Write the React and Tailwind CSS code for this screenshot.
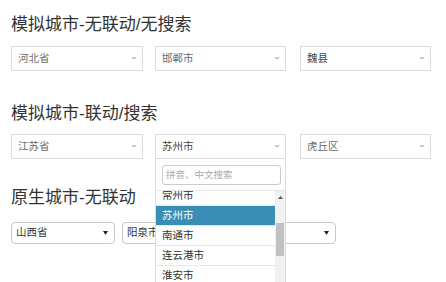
import React from 'react';

const font = { fontFamily: '"Liberation Sans", "Noto Sans CJK SC", sans-serif' };

function Arrow() {
  return (
    <svg width="6" height="3" viewBox="0 0 6 3" className="shrink-0">
      <path d="M0 0 L6 0 L3 3 Z" fill="#c8c8c8" />
    </svg>
  );
}

function Select2Box({ value, dark, className = '', children }) {
  return (
    <div className={`relative h-[25px] ${className}`}>
      <div className="flex h-full items-center justify-between border border-[#dcdcdc] bg-white pl-[6px] pr-[5px]">
        <span className={`text-[10.5px] ${dark ? 'text-[#444]' : 'text-[#6a6a6a]'}`}>{value}</span>
        <Arrow />
      </div>
      {children}
    </div>
  );
}

function NativeSelect({ value, className = '' }) {
  return (
    <div className={`flex h-[22px] w-[104px] items-center justify-between rounded-[4px] border border-[#c8c8c8] bg-white pl-[4px] pr-[6px] ${className}`}>
      <span className="text-[10.5px] text-[#333]">{value}</span>
      <svg width="5" height="4" viewBox="0 0 5 4">
        <path d="M0 0 L5 0 L2.5 4 Z" fill="#222" />
      </svg>
    </div>
  );
}

const cities = ['常州市', '苏州市', '南通市', '连云港市', '淮安市'];

function Dropdown() {
  return (
    <div className="absolute left-0 right-0 top-[24px] z-10 border border-[#dcdcdc] bg-white">
      <div className="pl-[6px] pr-[4px] pt-[6px] pb-[5px]">
        <div className="flex h-[20px] items-center rounded-[3px] border border-[#ccc] pl-[3px] text-[9.5px] text-[#aaa]">
          拼音、中文搜索
        </div>
      </div>
      <div className="flex h-[92px] overflow-hidden border-t border-[#e6e6e6]">
        <div className="flex-1 overflow-hidden">
          <div className="-mt-[5px]">
            {cities.map((c) => (
              <div
                key={c}
                className={`flex h-[20px] items-center border-b border-[#e6e6e6] pl-[6px] text-[10.5px] ${
                  c === '苏州市' ? 'bg-[#3a8db5] text-white' : 'text-[#333]'
                }`}
              >
                {c}
              </div>
            ))}
          </div>
        </div>
        <div className="flex w-[10px] flex-col items-center bg-[#f1f1f1]">
          <svg width="5" height="3" viewBox="0 0 5 3" className="mt-[5px]">
            <path d="M0 3 L5 3 L2.5 0 Z" fill="#555" />
          </svg>
          <div className="mt-[24px] h-[33px] w-[8px] bg-[#c1c1c1]" />
        </div>
      </div>
    </div>
  );
}

export default function App() {
  return (
    <div className="h-[282px] w-[446px] overflow-hidden bg-white pl-[11px] pt-[15px]" style={font}>
      <h2 className="text-[17px] leading-[20px] text-[#333]">模拟城市-无联动/无搜索</h2>
      <div className="mt-[11px] flex">
        <Select2Box value="河北省" className="w-[132px]" />
        <Select2Box value="邯郸市" className="ml-[12px] w-[131px]" />
        <Select2Box value="魏县" dark className="ml-[14px] w-[131px]" />
      </div>

      <h2 className="mt-[33px] text-[17px] leading-[20px] text-[#333]">模拟城市-联动/搜索</h2>
      <div className="mt-[10px] flex">
        <Select2Box value="江苏省" className="w-[132px]" />
        <Select2Box value="苏州市" dark className="ml-[12px] w-[131px]">
          <Dropdown />
        </Select2Box>
        <Select2Box value="虎丘区" className="ml-[14px] w-[131px]" />
      </div>

      <h2 className="mt-[29px] text-[17px] leading-[20px] text-[#333]">原生城市-无联动</h2>
      <div className="mt-[14px] flex">
        <NativeSelect value="山西省" />
        <NativeSelect value="阳泉市" className="ml-[7px]" />
        <NativeSelect value="城区" className="ml-[6px]" />
      </div>
    </div>
  );
}
